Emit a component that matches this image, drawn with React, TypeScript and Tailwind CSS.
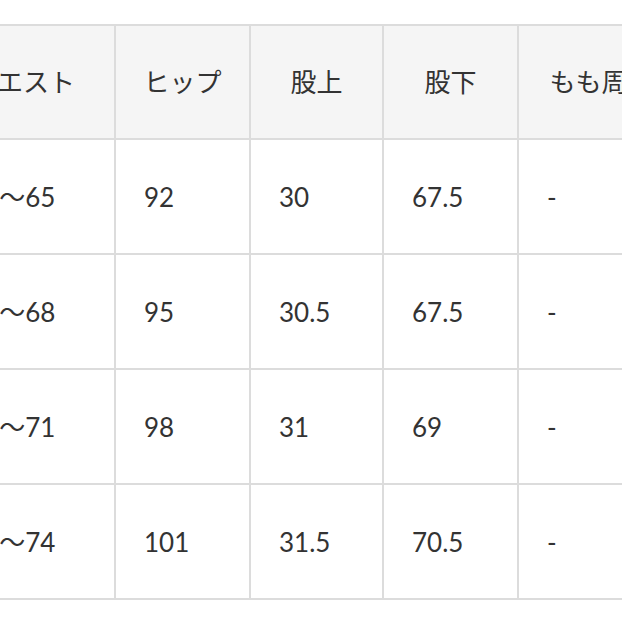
import React from "react";

const headers = ["ウエスト", "ヒップ", "股上", "股下", "もも周り"];
const rows = [
  ["62〜65", "92", "30", "67.5", "-"],
  ["65〜68", "95", "30.5", "67.5", "-"],
  ["68〜71", "98", "31", "69", "-"],
  ["71〜74", "101", "31.5", "70.5", "-"],
];

export default function App() {
  return (
    <div className="w-[622px] h-[622px] overflow-hidden bg-white relative">
      <div
        className="mt-[24px] ml-[-70px] w-[830px] bg-[#dcdcdc] p-[2px] grid grid-cols-[182px_133px_131px_133px_1fr] gap-[2px] text-[#333333] text-[26px]"
        style={{ fontFamily: "Lato, 'Noto Sans CJK JP', sans-serif" }}
      >
        {headers.map((h, i) => (
          <div
            key={h}
            className="bg-[#f5f5f5] h-[112px] flex items-center justify-center whitespace-nowrap leading-none"
          >
            <span className={i === 4 ? "ml-[-74px]" : ""}>{h}</span>
          </div>
        ))}
        {rows.map((r, ri) =>
          r.map((c, ci) => (
            <div
              key={ri + "-" + ci}
              className={
                "bg-white h-[113px] flex items-center whitespace-nowrap leading-none " +
                (ci === 0 ? "pl-[37px]" : "pl-[28px]")
              }
            >
              {c}
            </div>
          ))
        )}
      </div>
    </div>
  );
}
